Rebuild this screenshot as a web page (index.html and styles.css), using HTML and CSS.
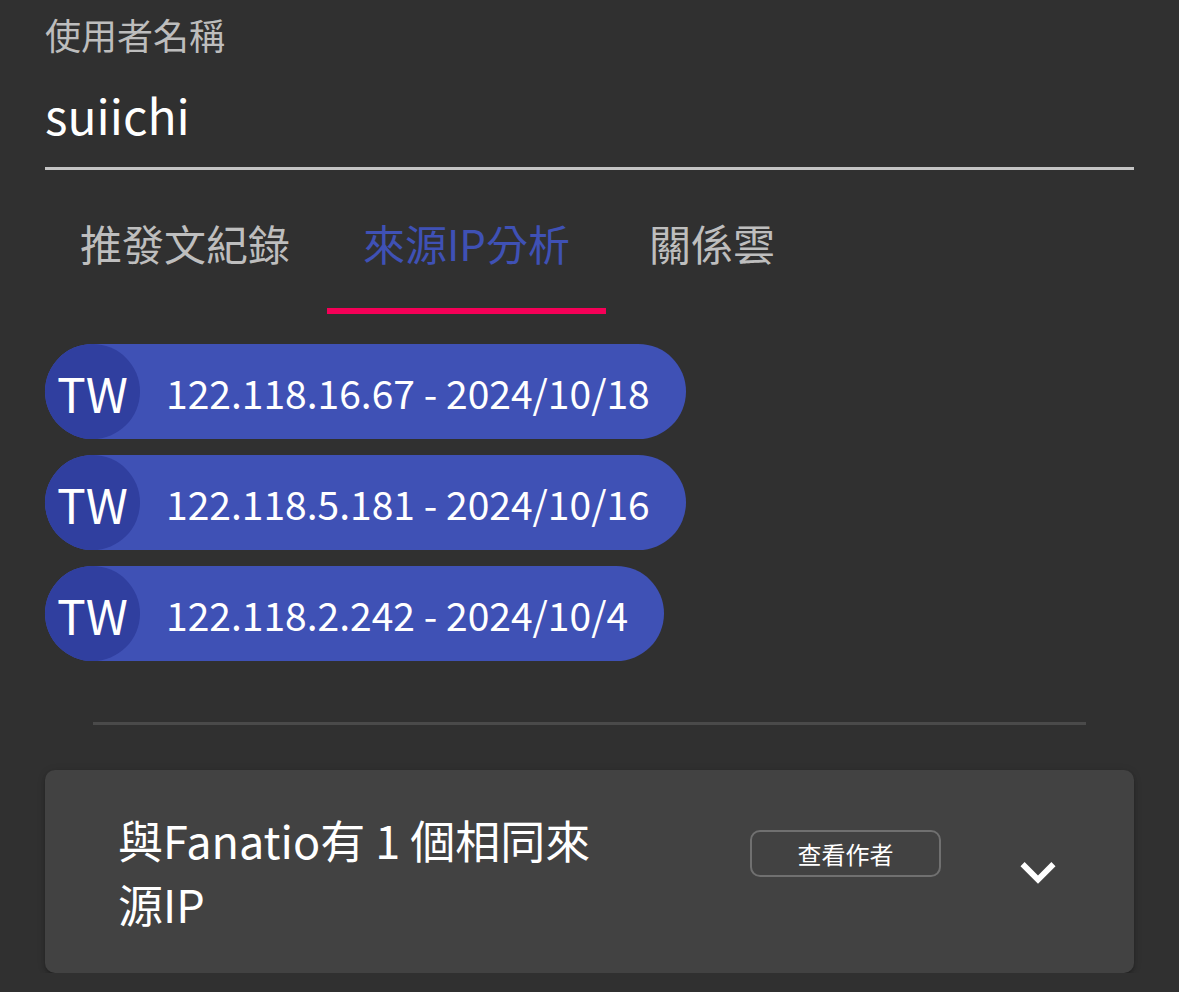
FILE: index.html
```html
<!DOCTYPE html>
<html>
<head>
<meta charset="utf-8" />
    <title>使用者來源IP分析</title>
    <link rel="stylesheet" href="styles.css">
</head>
<body>
    <div class="user_field">
        <label class="field_label">使用者名稱</label>
        <div class="field_value">suiichi</div>
    </div>

    <div class="tabs">
        <div class="tab">推發文紀錄</div>
        <div class="tab tab_active">來源IP分析</div>
        <div class="tab">關係雲</div>
    </div>

    <div class="ip_list">
        <div class="ip_chip">
            <span class="chip_avatar">TW</span>
            <span class="chip_text">122.118.16.67 - 2024/10/18</span>
        </div>
        <div class="ip_chip">
            <span class="chip_avatar">TW</span>
            <span class="chip_text">122.118.5.181 - 2024/10/16</span>
        </div>
        <div class="ip_chip">
            <span class="chip_avatar">TW</span>
            <span class="chip_text">122.118.2.242 - 2024/10/4</span>
        </div>
    </div>

    <hr class="divider" />

    <div class="panel">
        <div class="panel_title">與Fanatio有 1 個相同來源IP</div>
        <button class="btn_author" type="button">查看作者</button>
        <svg class="panel_icon" viewBox="0 0 24 24" width="70" height="70">
            <path d="M7.41,8.58L12,13.17L16.59,8.58L18,10L12,16L6,10L7.41,8.58Z" fill="#fff" />
        </svg>
    </div>
</body>
</html>
```

FILE: styles.css
```css
* {
    margin:0;
    padding:0;
    box-sizing:border-box;
    font-family:'Noto Sans CJK TC', 'Noto Sans CJK SC', sans-serif;
}
body,html {
    width:100%;
    background:#303030;
}
body {
    padding:0 45px;
    color:#fff;
}

/* text field */
.user_field {
    padding-top:10px;
    border-bottom:3px solid #c4c4c4;
}
.field_label {
    display:block;
    font-size:36px;
    line-height:48px;
    color:#bdbdbd;
}
.field_value {
    margin-top:24px;
    padding-bottom:21px;
    font-size:48px;
    line-height:64px;
    color:#fff;
}

/* tabs */
.tabs {
    display:flex;
    height:144px;
}
.tab {
    display:flex;
    align-items:center;
    justify-content:center;
    min-width:212px;
    padding:0 36px;
    font-size:42px;
    color:rgba(255,255,255,0.7);
    border-bottom:6px solid transparent;
    padding-top:6px;
}
.tab:first-child {
    padding:6px 37px 0 35px;
}
.tab_active {
    color:#3f51b5;
    border-bottom-color:#f50057;
}

/* ip chips */
.ip_list {
    display:flex;
    flex-direction:column;
    align-items:flex-start;
    gap:16px;
    margin-top:30px;
}
.ip_chip {
    display:flex;
    align-items:center;
    height:95px;
    border-radius:48px;
    background:#3f51b5;
    padding-right:36px;
}
.chip_avatar {
    display:flex;
    align-items:center;
    justify-content:center;
    width:95px;
    height:95px;
    border-radius:50%;
    background:#303f9f;
    font-size:48px;
}
.chip_text {
    margin-left:26px;
    font-size:39px;
}

.divider {
    margin:61px 48px 0 48px;
    border:none;
    height:3px;
    background:#4a4a4a;
}

/* expansion panel */
.panel {
    display:flex;
    align-items:center;
    min-height:203px;
    margin-top:45px;
    padding:0 61px 0 73px;
    background:#424242;
    border-radius:10px;
    box-shadow:0 3px 3px -2px rgba(0,0,0,.2), 0 3px 4px 0 rgba(0,0,0,.14), 0 1px 8px 0 rgba(0,0,0,.12);
}
.panel_title {
    flex:0 0 490px;
    font-size:45px;
    line-height:64px;
    color:#fff;
}
.btn_author {
    align-self:flex-start;
    margin-top:60px;
    margin-left:142px;
    width:191px;
    height:47px;
    border:2px solid #707070;
    border-radius:10px;
    background:transparent;
    color:#fff;
    font-size:24px;
}
.panel_icon {
    margin-left:auto;
}
```
